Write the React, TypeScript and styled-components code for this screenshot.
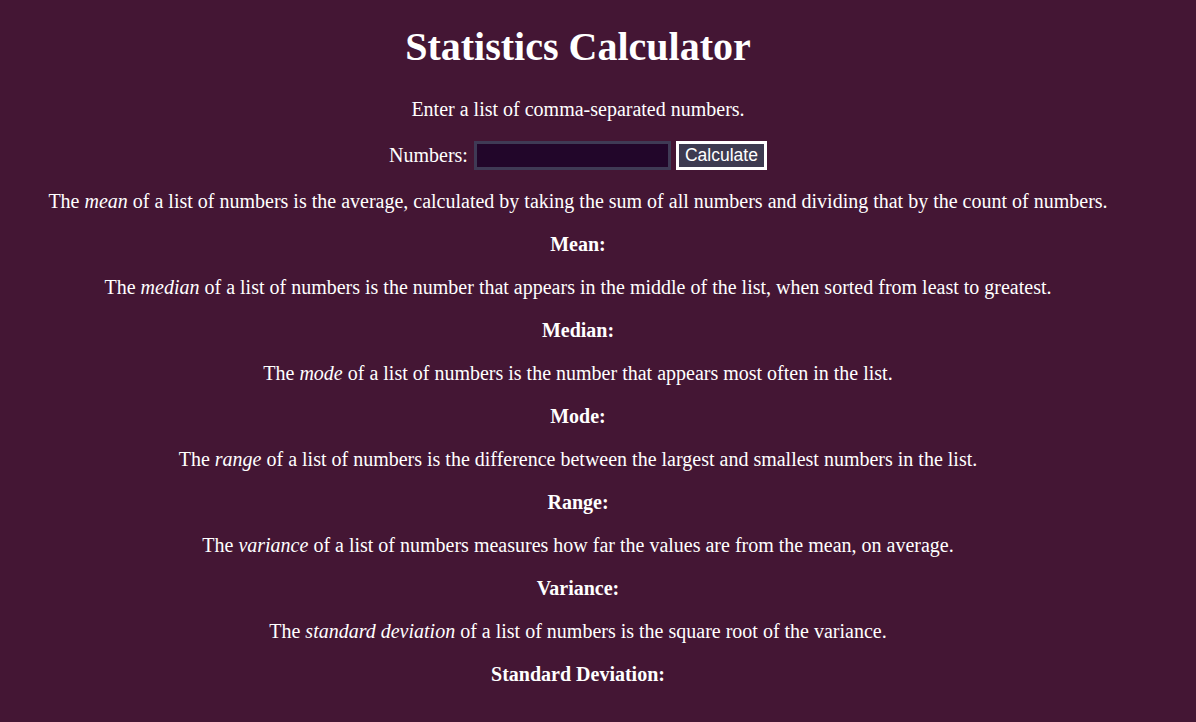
import React from "react";
import styled, { createGlobalStyle } from "styled-components";

const Global = createGlobalStyle`
  html, body { margin: 0; padding: 0; background: #441634; }
  body { font-family: "Liberation Serif", "Times New Roman", serif; color: #ffffff; }
`;

const Page = styled.main`
  text-align: center;
  padding: 2px 48px 20px 8px;
  font-size: 20px;
`;

const Title = styled.h1`
  font-size: 40px;
  font-weight: bold;
  line-height: 46px;
  margin: 22px 0 28px;
`;

const Para = styled.p`
  margin: 0 0 20px;
  line-height: 23px;
`;

const Form = styled.div`
  display: flex;
  justify-content: center;
  align-items: center;
  margin: 0 0 20px;
  height: 29px;
`;

const Label = styled.span`
  margin-right: 6px;
`;

const Input = styled.input`
  width: 197px;
  height: 29px;
  box-sizing: border-box;
  background: #22062a;
  border: 3px solid #3f3a55;
  color: #fff;
  outline: none;
  padding: 0 4px;
  margin: 0 5px 0 0;
`;

const Button = styled.button`
  width: 91px;
  height: 29px;
  box-sizing: border-box;
  background: #3d3a50;
  border: 3px solid #ffffff;
  color: #ffffff;
  font-family: "Liberation Sans", Arial, sans-serif;
  font-size: 17.5px;
  padding: 0;
`;

const Result = styled.p`
  margin: 0 0 20px;
  line-height: 23px;
  font-weight: bold;
`;

const stats = [
  { term: "mean", post: "of a list of numbers is the average, calculated by taking the sum of all numbers and dividing that by the count of numbers.", label: "Mean:" },
  { term: "median", post: "of a list of numbers is the number that appears in the middle of the list, when sorted from least to greatest.", label: "Median:" },
  { term: "mode", post: "of a list of numbers is the number that appears most often in the list.", label: "Mode:" },
  { term: "range", post: "of a list of numbers is the difference between the largest and smallest numbers in the list.", label: "Range:" },
  { term: "variance", post: "of a list of numbers measures how far the values are from the mean, on average.", label: "Variance:" },
  { term: "standard deviation", post: "of a list of numbers is the square root of the variance.", label: "Standard Deviation:" },
];

export default function App() {
  return (
    <>
      <Global />
      <Page>
        <Title>Statistics Calculator</Title>
        <Para>Enter a list of comma-separated numbers.</Para>
        <Form>
          <Label>Numbers:</Label>
          <Input type="text" />
          <Button>Calculate</Button>
        </Form>
        {stats.map((s) => (
          <React.Fragment key={s.label}>
            <Para>
              The <em>{s.term}</em> {s.post}
            </Para>
            <Result>{s.label}</Result>
          </React.Fragment>
        ))}
      </Page>
    </>
  );
}
